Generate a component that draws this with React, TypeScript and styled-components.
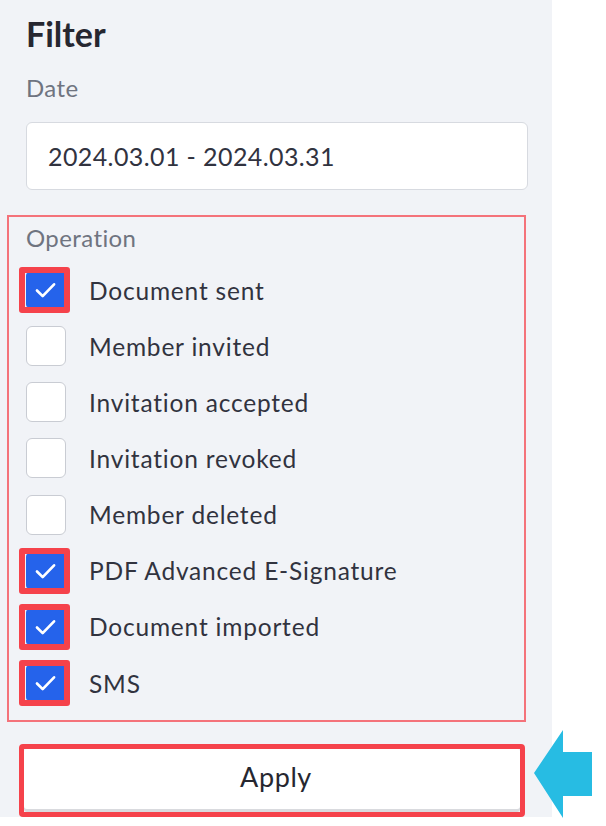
import * as React from "react";
import styled, { createGlobalStyle } from "styled-components";

const GlobalStyle = createGlobalStyle`
  html, body {
    margin: 0;
    padding: 0;
    background: #ffffff;
  }
  body {
    font-family: "Lato", "Noto Sans", sans-serif;
  }
`;

const Page = styled.div`
  position: relative;
  width: 606px;
  height: 826px;
  display: flex;
  align-items: flex-start;
`;

const Panel = styled.aside`
  width: 552px;
  height: 817px;
  box-sizing: border-box;
  background: #f1f3f7;
  padding: 12px 24px 0 26px;
  display: flex;
  flex-direction: column;
`;

const Title = styled.h2`
  margin: 0;
  font-size: 34px;
  line-height: 44px;
  font-weight: 700;
  color: #262730;
`;

const FieldLabel = styled.div`
  font-size: 24px;
  line-height: 30px;
  color: #6f7480;
  letter-spacing: 0.4px;
`;

const DateLabel = styled(FieldLabel)`
  margin-top: 17px;
`;

const DateInput = styled.div`
  margin-top: 19px;
  height: 68px;
  box-sizing: border-box;
  background: #ffffff;
  border: 1px solid #d7dae0;
  border-radius: 6px;
  display: flex;
  align-items: center;
  padding-left: 21px;
  font-size: 25px;
  letter-spacing: 0.4px;
  color: #31333f;
`;

const Group = styled.div`
  margin: 25px 2px 0 -19px;
  height: 507px;
  box-sizing: border-box;
  border: 2px solid #f4727a;
  padding: 6px 0 0 17px;
  display: flex;
  flex-direction: column;
`;

const GroupLabel = styled(FieldLabel)`
  margin-bottom: 9px;
`;

const Row = styled.label`
  display: flex;
  align-items: center;
  gap: 23px;
  height: 56.15px;
  font-size: 24.5px;
  letter-spacing: 0.8px;
  color: #31333f;
`;

const BoxSlot = styled.span`
  position: relative;
  width: 40px;
  height: 40px;
  flex: none;
`;

const Box = styled.span<{ $checked: boolean }>`
  display: flex;
  align-items: center;
  justify-content: center;
  width: 40px;
  height: 40px;
  box-sizing: border-box;
  border-radius: 6px;
  background: ${(p) => (p.$checked ? "#2563eb" : "#ffffff")};
  border: 1px solid ${(p) => (p.$checked ? "#2563eb" : "#c9ccd3")};
`;

const Mark = styled.span`
  position: absolute;
  left: -7px;
  top: -3px;
  width: 51px;
  height: 46px;
  box-sizing: border-box;
  border: 6px solid #f5424b;
  border-radius: 3px;
`;

const ApplyMark = styled.div`
  margin: 22px 3px 0 -7px;
  border: 5px solid #f5424b;
  border-radius: 4px;
`;

const ApplyButton = styled.button`
  width: 100%;
  height: 63px;
  display: block;
  background: #ffffff;
  border: none;
  border-radius: 3px;
  box-shadow: inset 0 -3px 0 #d9dade;
  font-family: "Lato", "Noto Sans", sans-serif;
  font-size: 27px;
  letter-spacing: 0.6px;
  color: #262730;
  padding: 0 0 8px 8px;
`;

const Arrow = styled.svg`
  position: absolute;
  left: 534px;
  top: 730px;
`;

const operations = [
  { label: "Document sent", checked: true },
  { label: "Member invited", checked: false },
  { label: "Invitation accepted", checked: false },
  { label: "Invitation revoked", checked: false },
  { label: "Member deleted", checked: false },
  { label: "PDF Advanced E-Signature", checked: true },
  { label: "Document imported", checked: true },
  { label: "SMS", checked: true },
];

function Check({ checked }: { checked: boolean }) {
  return (
    <BoxSlot>
      <Box $checked={checked}>
        {checked && (
          <svg width="40" height="40" viewBox="0 0 40 40">
            <path d="M10.5 20.5 L16.5 26.5 L28.5 14" fill="none" stroke="#fff" strokeWidth="2.8" strokeLinecap="round" strokeLinejoin="round" />
          </svg>
        )}
      </Box>
      {checked && <Mark />}
    </BoxSlot>
  );
}

export default function App() {
  return (
    <Page>
      <GlobalStyle />
      <Panel>
        <Title>Filter</Title>
        <DateLabel>Date</DateLabel>
        <DateInput>2024.03.01 - 2024.03.31</DateInput>
        <Group>
          <GroupLabel>Operation</GroupLabel>
          {operations.map((op) => (
            <Row key={op.label}>
              <Check checked={op.checked} />
              {op.label}
            </Row>
          ))}
        </Group>
        <ApplyMark>
          <ApplyButton>Apply</ApplyButton>
        </ApplyMark>
      </Panel>
      <Arrow width="60" height="90" viewBox="0 0 60 90">
        <polygon points="0,43 29,0 29,22 58,22 58,66 29,66 29,88" fill="#27bce3" />
      </Arrow>
    </Page>
  );
}
